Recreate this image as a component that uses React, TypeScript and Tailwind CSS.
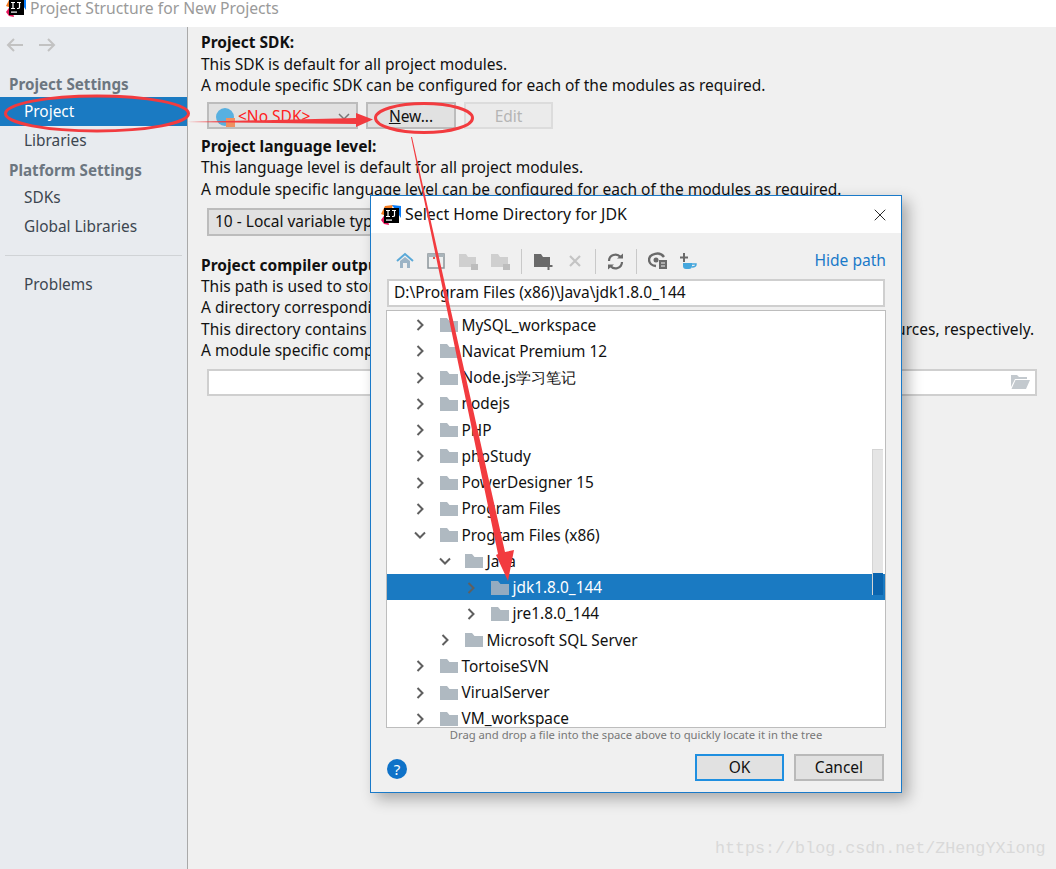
import React from "react"
import { X } from "lucide-react"

const font = "[font-family:'Noto_Sans','Open_Sans',sans-serif]"

const treeRows = [
  { name: "MySQL_workspace", depth: 0 },
  { name: "Navicat Premium 12", depth: 0 },
  { name: "Node.js学习笔记", depth: 0 },
  { name: "nodejs", depth: 0 },
  { name: "PHP", depth: 0 },
  { name: "phpStudy", depth: 0 },
  { name: "PowerDesigner 15", depth: 0 },
  { name: "Program Files", depth: 0 },
  { name: "Program Files (x86)", depth: 0, open: true },
  { name: "Java", depth: 1, open: true },
  { name: "jdk1.8.0_144", depth: 2, selected: true },
  { name: "jre1.8.0_144", depth: 2 },
  { name: "Microsoft SQL Server", depth: 1 },
  { name: "TortoiseSVN", depth: 0 },
  { name: "VirualServer", depth: 0 },
  { name: "VM_workspace", depth: 0 },
]

const depthPad = ["pl-[26px]", "pl-[51px]", "pl-[77px]"]

function IdeaLogo() {
  return (
    <svg width="20" height="20" viewBox="0 0 20 20" className="shrink-0">
      <path d="M0 9 L4 1 L12 0 L8 12 Z" fill="#f47b20" />
      <path d="M0 15 L5 8 L8 20 L3 19 Z" fill="#e8175d" />
      <path d="M11 0 L20 1 L20 13 Z" fill="#087cfa" />
      <rect x="3" y="3" width="15" height="15" fill="#000" />
      <rect x="5" y="14.500" width="6" height="1.200" fill="#fff" />
      <path d="M5 5.500 H9 M7 5.500 V11.500 M5 11.500 H9 M11 5.500 H15 M13.500 5.500 V10.500 Q13.500 11.500 12 11.500 H11" stroke="#fff" strokeWidth="1.200" fill="none" />
    </svg>
  )
}

function Folder({ dim = false }: { dim?: boolean }) {
  return (
    <svg width="18" height="14" viewBox="0 0 18 14" className="shrink-0">
      <path d="M0 0 H7 L9.500 3 H18 V14 H0 Z" fill={dim ? "#94abc0" : "#afb9c1"} />
    </svg>
  )
}

function Chevron({ open }: { open?: boolean }) {
  return (
    <svg width="14" height="14" viewBox="0 0 14 14" className="shrink-0">
      <path d={open ? "M2 4.500 L7 9.500 L12 4.500" : "M4.500 2 L9.500 7 L4.500 12"} stroke="#5f5f5f" strokeWidth="2" fill="none" />
    </svg>
  )
}

function SideItem({ children, active }: { children: React.ReactNode; active?: boolean }) {
  return (
    <div className={`flex h-[29px] items-center pl-[24px] text-[15.400px] ${active ? "bg-[#1a7ac2] text-white" : "text-[#3c4650]"}`}>
      {children}
    </div>
  )
}

function Toolbar() {
  return (
    <div className="flex h-[46px] items-center pl-[25px] pr-[15px] pt-[10px]">
      <svg width="18" height="18" viewBox="0 0 18 18" className="mr-[13px]">
        <path d="M1 9 L9 2 L17 9" stroke="#5aa9d8" strokeWidth="2" fill="none" />
        <path d="M4 9 L9 5 L14 9 V16 H11 V11 H7 V16 H4 Z" fill="#9cb4c6" />
      </svg>
      <svg width="18" height="16" viewBox="0 0 18 16" className="mr-[14px]">
        <rect x="1" y="1" width="16" height="14" fill="#eef0f0" stroke="#8a9499" strokeWidth="1.500" />
        <rect x="1" y="1" width="16" height="3" fill="#a9b4ba" />
        <rect x="6" y="4" width="2" height="2" fill="#e0584f" />
        <rect x="10" y="4" width="2" height="2" fill="#5aa04f" />
      </svg>
      <svg width="19" height="17" viewBox="0 0 19 17" className="mr-[13px]">
        <path d="M0 1 H7 L9 4 H17 V14 H0 Z" fill="#cfcfcf" />
        <rect x="12" y="11" width="7" height="6" fill="#bdbdbd" />
      </svg>
      <svg width="19" height="17" viewBox="0 0 19 17" className="mr-[11px]">
        <path d="M0 1 H7 L9 4 H17 V14 H0 Z" fill="#cfcfcf" />
        <rect x="12" y="11" width="7" height="6" fill="#bdbdbd" />
      </svg>
      <div className="mr-[12px] h-[25px] w-px bg-[#c9c9c9]" />
      <svg width="19" height="17" viewBox="0 0 19 17" className="mr-[15px]">
        <path d="M0 1 H7 L9 4 H16 V14 H0 Z" fill="#6a6a6a" />
        <path d="M14.500 9 V17 M10.500 13 H18.500" stroke="#6a6a6a" strokeWidth="2" />
      </svg>
      <svg width="14" height="14" viewBox="0 0 14 14" className="mr-[13px]">
        <path d="M2 2 L12 12 M12 2 L2 12" stroke="#c4c4c4" strokeWidth="2.200" />
      </svg>
      <div className="mr-[11px] h-[25px] w-px bg-[#c9c9c9]" />
      <svg width="17" height="17" viewBox="0 0 17 17" className="mr-[12px]">
        <path d="M2 8 A6.500 6.500 0 0 1 13.500 4 M15 9 A6.500 6.500 0 0 1 3.500 13" stroke="#6a6a6a" strokeWidth="2.200" fill="none" />
        <path d="M10 5.500 H16 V0.500 Z M7 11.500 H1 V16.500 Z" fill="#6a6a6a" />
      </svg>
      <div className="mr-[11px] h-[25px] w-px bg-[#c9c9c9]" />
      <svg width="20" height="18" viewBox="0 0 20 18" className="mr-[10px]">
        <path d="M1 8 A8 6.500 0 0 1 16 5" stroke="#6a6a6a" strokeWidth="2.400" fill="none" />
        <path d="M1 8 A8 6.500 0 0 0 8 14" stroke="#6a6a6a" strokeWidth="2.400" fill="none" />
        <circle cx="8" cy="8" r="2.500" fill="#6a6a6a" />
        <rect x="11" y="8" width="8" height="9" fill="#6a6a6a" />
        <path d="M13 11 H17 M13 14 H17" stroke="#f0f0f0" strokeWidth="1" />
      </svg>
      <svg width="20" height="18" viewBox="0 0 20 18">
        <path d="M6 1 V10 M2 5.500 H10" stroke="#6a6a6a" strokeWidth="2" />
        <path d="M5 11 H14 V14 Q14 17 11 17 H8 Q5 17 5 14 Z" fill="#45a7dd" />
        <path d="M14 12 H18 Q18 15 14 15" stroke="#45a7dd" strokeWidth="1.500" fill="none" />
      </svg>
      <span className="ml-auto text-[15.600px] text-[#1a7ac9]">Hide path</span>
    </div>
  )
}

function SelectDialog() {
  return (
    <div className="absolute left-[370px] top-[195px] flex h-[598px] w-[532px] flex-col border border-[#1a7ac9] bg-[#f0f0f0] shadow-[6px_6px_14px_rgba(0,0,0,0.3)]">
      <div className="flex h-[37px] items-center bg-white pl-[10px] pr-[11px] text-[15.900px] text-[#111]">
        <IdeaLogo />
        <span className="ml-[4px]">Select Home Directory for JDK</span>
        <X size={20} strokeWidth={1} className="ml-auto text-black" />
      </div>
      <Toolbar />
      <div className="mx-[16px] flex h-[28px] items-center border-2 border-[#cfcfcf] bg-white pl-[5px] text-[15.500px] text-[#111]">
        {"D:\\Program Files (x86)\\Java\\jdk1.8.0_144"}
      </div>
      <div className="relative mx-[15px] mt-[3px] h-[418px] shrink-0 overflow-hidden border border-[#bdbdbd] bg-white">
        {treeRows.map((row) => (
          <div
            key={row.name}
            className={`flex h-[26.250px] items-center pt-[2px] text-[15.400px] ${depthPad[row.depth]} ${row.selected ? "bg-[#1a7ac2] text-white" : "text-[#111]"}`}
          >
            <Chevron open={row.open} />
            <span className="ml-[13px]"><Folder dim={row.selected} /></span>
            <span className="ml-[3.500px] whitespace-nowrap">{row.name}</span>
          </div>
        ))}
        <div className="absolute right-[2px] top-[138px] flex h-[146px] w-[11px] flex-col justify-end border-l border-t border-[#d4d4d4] bg-[#e5e5e5]">
          <div className="h-[22px] bg-[#0a64ae]" />
        </div>
      </div>
      <div className="text-center text-[11.250px] leading-[14px] text-[#777]">
        Drag and drop a file into the space above to quickly locate it in the tree
      </div>
      <div className="mt-[12px] flex items-start pl-[16px] pr-[17px]">
        <div className="mt-[5px] flex h-[20px] w-[20px] items-center justify-center rounded-full bg-[#0f72c8] text-[15px] leading-none text-white">?</div>
        <div className="ml-auto flex h-[27px] w-[89px] items-center justify-center border-2 border-[#1f8fe0] bg-[#e1e1e1] text-[15.500px] text-[#111]">OK</div>
        <div className="ml-[10px] flex h-[27px] w-[90px] items-center justify-center border-2 border-[#b9b9b9] bg-[#e1e1e1] text-[15.500px] text-[#111]">Cancel</div>
      </div>
    </div>
  )
}

function Annotations() {
  return (
    <svg className="pointer-events-none absolute left-0 top-0" width="1056" height="869" viewBox="0 0 1056 869">
      <ellipse cx="97" cy="113.500" rx="91.500" ry="17.500" fill="none" stroke="#f23b3f" strokeWidth="3" />
      <ellipse cx="424" cy="118" rx="48.500" ry="14.500" fill="none" stroke="#f23b3f" strokeWidth="3" />
      <path d="M187 122 L356 118 L356 113 L373 119.500 L356 127 L356 124 Z" fill="#f23b3f" />
      <path d="M411 137 L412 137 L505 552 L514 550 L508 581 L496 555 L498 554 Z" fill="#f23b3f" />
    </svg>
  )
}

export default function App() {
  return (
    <div className={`relative flex h-[869px] w-[1056px] flex-col overflow-hidden bg-[#f0f0f0] ${font}`}>
      <div className="flex h-[27px] items-start bg-white pl-[6px] text-[15.700px] leading-[17px] text-[#9a9a9a]">
        <div className="-mt-[3px]"><IdeaLogo /></div>
        <span className="ml-[4px]">Project Structure for New Projects</span>
      </div>
      <div className="flex flex-1">
        <aside className="w-[188px] shrink-0 border-r border-[#a9a9a9] bg-[#e8ebef]">
          <div className="flex h-[36px] items-center gap-[14px] pl-[6px] text-[#c0c0c0]">
            <svg width="18" height="14" viewBox="0 0 18 14"><path d="M17 7 H2 M8 1 L2 7 L8 13" stroke="#c2c2c2" strokeWidth="2" fill="none" /></svg>
            <svg width="18" height="14" viewBox="0 0 18 14"><path d="M1 7 H16 M10 1 L16 7 L10 13" stroke="#c2c2c2" strokeWidth="2" fill="none" /></svg>
          </div>
          <div className="mt-[8px] flex h-[26px] items-center pl-[9px] text-[15.200px] font-bold text-[#6c7680]">Project Settings</div>
          <SideItem active>Project</SideItem>
          <SideItem>Libraries</SideItem>
          <div className="flex h-[28px] items-center pl-[9px] pt-[3px] text-[15.200px] font-bold text-[#6c7680]">Platform Settings</div>
          <SideItem>SDKs</SideItem>
          <SideItem>Global Libraries</SideItem>
          <div className="mx-[5px] mt-[14px] h-px bg-[#d0d3d6]" />
          <div className="mt-[14px]"><SideItem>Problems</SideItem></div>
        </aside>
        <main className="flex-1 pl-[13px] pr-[20px] pt-[5px] text-[15.500px] leading-[21.500px] text-[#111]">
          <div className="font-bold">Project SDK:</div>
          <div>This SDK is default for all project modules.</div>
          <div>A module specific SDK can be configured for each of the modules as required.</div>
          <div className="mt-[5px] flex h-[27px] gap-[8px] pl-[6px]">
            <div className="flex w-[151px] items-center border-2 border-[#bcbcbc] bg-[#e1e1e1] pl-[7px] pr-[4px] pt-[3px]">
              <div className="relative h-[18px] w-[18px] rounded-full bg-[#58b0e0]">
                <div className="absolute -right-[1px] bottom-[-1px] h-[9px] w-[9px] bg-[#f09060]" />
              </div>
              <span className="ml-[4px] text-[#ff2020]">{"<No SDK>"}</span>
              <svg width="12" height="8" viewBox="0 0 12 8" className="ml-auto mr-[2px]"><path d="M1 1 L6 6 L11 1" stroke="#777" strokeWidth="1.500" fill="none" /></svg>
            </div>
            <div className="flex w-[90px] items-center justify-center border-2 border-[#bcbcbc] bg-[#e1e1e1] pt-[3px]">
              <span><span className="underline">N</span>ew...</span>
            </div>
            <div className="flex w-[89px] items-center justify-center border-2 border-[#dcdcdc] bg-[#ebebeb] pt-[3px] text-[#b5b5b5]">Edit</div>
          </div>
          <div className="mt-[7px] font-bold">Project language level:</div>
          <div>This language level is default for all project modules.</div>
          <div>A module specific language level can be configured for each of the modules as required.</div>
          <div className="ml-[6px] mt-[8px] flex h-[28px] w-[400px] items-center border-2 border-[#bcbcbc] bg-[#e1e1e1] pl-[6px]">10 - Local variable type inference</div>
          <div className="mt-[19px] font-bold leading-[20.500px]">Project compiler output:</div>
          <div>This path is used to store all project compilation results.</div>
          <div>A directory corresponding to each module is created under this path.</div>
          <div className="whitespace-nowrap tracking-[0.060px]">This directory contains two subdirectories: Production and Test for production code and test sources, respectively.</div>
          <div>A module specific compiler output path can be configured for each of the modules as required.</div>
          <div className="ml-[6px] mt-[7px] flex h-[27px] w-[830px] items-center justify-end border-2 border-[#cfcfcf] bg-white pr-[5px]">
            <svg width="19" height="14" viewBox="0 0 19 14"><path d="M0 0 H6 L8 2 H16 V4 H4 L0 12 Z M4.500 5 H19 L15 14 H0.500 Z" fill="#c3c9ce" /></svg>
          </div>
        </main>
      </div>
      <SelectDialog />
      <Annotations />
      <div className="absolute left-[715px] top-[838px] whitespace-nowrap font-['Liberation_Mono',monospace] text-[16.700px] leading-[22px] text-[#d9d9d9]">
        https://blog.csdn.net/ZHengYXiong
      </div>
    </div>
  )
}
